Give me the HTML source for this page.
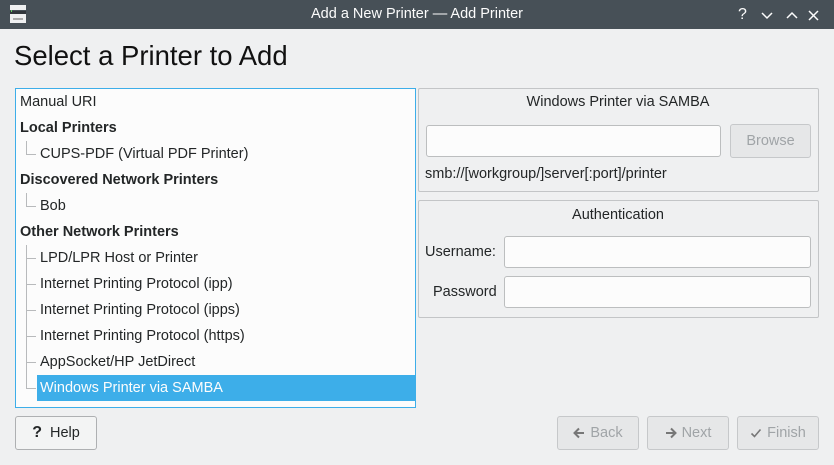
<!DOCTYPE html>
<html><head><style>
body{margin:0;width:834px;height:465px;background:#eff0f1;font-family:"Liberation Sans",sans-serif;font-size:14.5px;color:#232627;position:relative;overflow:hidden}
.a{position:absolute}
.tb{left:0;top:0;width:834px;height:29px;background:#475057;color:#fcfcfc}
.tree{left:15px;top:88px;width:399px;height:318px;background:#fcfcfc;border:1px solid #3daee9}
.row{position:absolute;left:4px;height:26px;line-height:26px;white-space:nowrap}
.b{font-weight:bold}
.grp{border:1px solid #c3c5c7;border-radius:2px;background:#eff0f1}
.inp{background:#fcfcfc;border:1px solid #bcbebf;border-radius:3px}
.btn{border:1px solid #c6c8ca;border-radius:3px;background:#e6e7e8;text-align:center;line-height:32px;color:#a0a4a7}
.btn svg{vertical-align:-2px;margin-right:5px}
.ln{position:absolute;background:#b8babc}
</style></head><body>
<div class="a tb">
<svg class="a" style="left:10px;top:5px" width="16" height="18"><rect x="0" y="0" width="16" height="5" fill="#eff0f1"/><rect x="0" y="6" width="16" height="3" fill="#31363b"/><rect x="0" y="9" width="16" height="9" fill="#eff0f1"/><rect x="3" y="13" width="10" height="2" fill="#aaa"/><rect x="1" y="5" width="1" height="2" fill="#6c6"/></svg>
<div class="a" style="left:0;width:834px;top:0;line-height:29px;text-align:center;font-size:14.5px">Add a New Printer — Add Printer</div>
<div class="a" style="left:738px;top:0;line-height:29px;font-size:16px">?</div>
<svg class="a" style="left:760px;top:8px" width="60" height="14" fill="none" stroke="#fcfcfc" stroke-width="1.5"><path d="M2 5l5 5 5-5M27 10l5-5 5 5M49 3l9 9M58 3l-9 9"/></svg>
</div>
<div class="a" style="left:14px;top:40px;font-size:27.5px;color:#111">Select a Printer to Add</div>
<div class="a tree">
<div class="row" style="top:0">Manual URI</div>
<div class="row b" style="top:26px">Local Printers</div>
<div class="row" style="top:52px;left:24px">CUPS-PDF (Virtual PDF Printer)</div>
<div class="row b" style="top:78px">Discovered Network Printers</div>
<div class="row" style="top:104px;left:24px">Bob</div>
<div class="row b" style="top:130px">Other Network Printers</div>
<div class="row" style="top:156px;left:24px">LPD/LPR Host or Printer</div>
<div class="row" style="top:182px;left:24px">Internet Printing Protocol (ipp)</div>
<div class="row" style="top:208px;left:24px">Internet Printing Protocol (ipps)</div>
<div class="row" style="top:234px;left:24px">Internet Printing Protocol (https)</div>
<div class="row" style="top:260px;left:24px">AppSocket/HP JetDirect</div>
<div class="a" style="left:21px;top:286px;width:378px;height:26px;background:#3daee9"></div>
<div class="row" style="top:286px;left:24px;color:#fcfcfc">Windows Printer via SAMBA</div>
<div class="ln" style="left:10px;top:52px;width:1px;height:13px"></div><div class="ln" style="left:10px;top:65px;width:10px;height:1px"></div>
<div class="ln" style="left:10px;top:104px;width:1px;height:13px"></div><div class="ln" style="left:10px;top:117px;width:10px;height:1px"></div>
<div class="ln" style="left:10px;top:156px;width:1px;height:143px"></div>
<div class="ln" style="left:10px;top:169px;width:10px;height:1px"></div><div class="ln" style="left:10px;top:195px;width:10px;height:1px"></div><div class="ln" style="left:10px;top:221px;width:10px;height:1px"></div><div class="ln" style="left:10px;top:247px;width:10px;height:1px"></div><div class="ln" style="left:10px;top:273px;width:10px;height:1px"></div><div class="ln" style="left:10px;top:299px;width:10px;height:1px"></div>
</div>
<div class="a grp" style="left:418px;top:88px;width:399px;height:102px"></div>
<div class="a" style="left:418px;top:94px;width:400px;text-align:center">Windows Printer via SAMBA</div>
<div class="a inp" style="left:426px;top:125px;width:293px;height:30px"></div>
<div class="a btn" style="left:730px;top:124px;width:79px;height:32px">Browse</div>
<div class="a" style="left:425px;top:166px">smb://[workgroup/]server[:port]/printer</div>
<div class="a grp" style="left:418px;top:200px;width:399px;height:116px"></div>
<div class="a" style="left:418px;top:207px;width:400px;text-align:center">Authentication</div>
<div class="a" style="left:425px;top:244px">Username:</div>
<div class="a inp" style="left:504px;top:236px;width:305px;height:30px"></div>
<div class="a" style="left:433px;top:284px">Password</div>
<div class="a inp" style="left:504px;top:276px;width:305px;height:30px"></div>
<div class="a btn" style="left:15px;top:416px;width:80px;height:32px;background:#f3f4f4;color:#232627;border-color:#aeb0b2"><b style="font-size:16px;margin-right:8px">?</b>Help</div>
<div class="a btn" style="left:557px;top:416px;width:80px;height:32px"><svg width="12" height="12" fill="none" stroke="#777" stroke-width="2"><path d="M11 6H2M6 1.5L1.5 6 6 10.5"/></svg>Back</div>
<div class="a btn" style="left:647px;top:416px;width:80px;height:32px"><svg width="12" height="12" fill="none" stroke="#777" stroke-width="2"><path d="M1 6h9M6 1.5L10.5 6 6 10.5"/></svg>Next</div>
<div class="a btn" style="left:737px;top:416px;width:80px;height:32px"><svg width="12" height="12" fill="none" stroke="#777" stroke-width="1.6"><path d="M1.5 6.5l3 3 6-7"/></svg>Finish</div>
</body></html>
